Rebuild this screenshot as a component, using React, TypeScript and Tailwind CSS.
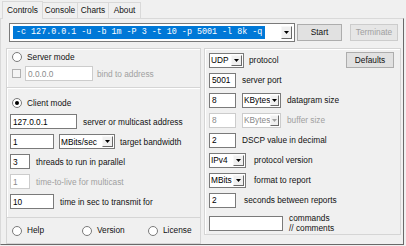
import React from 'react'

const FONT = { fontFamily: '"Liberation Sans", Arial, sans-serif' }

function Arrow({ disabled }: { disabled?: boolean }) {
  return (
    <div className="w-[11px] h-full bg-[#f0f0f0] border-t border-l border-t-[#f8f8f8] border-l-[#f8f8f8] border-r border-b border-r-[#696969] border-b-[#696969] flex items-center justify-center">
      <svg width="5" height="3" viewBox="0 0 5 3">
        <path d="M0 0h5L2.5 3z" fill={disabled ? '#a0a0a0' : '#000'} />
      </svg>
    </div>
  )
}

function Input({ value = '', w, disabled }: { value?: string; w: string; disabled?: boolean }) {
  return (
    <div
      className={`${w} h-[15px] bg-white border flex items-center px-[2px] leading-none ${
        disabled ? 'border-[#cccccc] text-[#8a8a8a]' : 'border-[#7a7a7a] text-black'
      }`}
    >
      {value}
    </div>
  )
}

function Combo({ value, w, disabled }: { value: string; w: string; disabled?: boolean }) {
  return (
    <div
      className={`${w} h-[15px] bg-white border flex items-stretch p-[1px] leading-none ${
        disabled ? 'border-[#cccccc] text-[#8a8a8a]' : 'border-[#7a7a7a] text-black'
      }`}
    >
      <div className="flex-1 flex items-center">{value}</div>
      <Arrow disabled={disabled} />
    </div>
  )
}

function Radio({ checked, label }: { checked?: boolean; label: string }) {
  return (
    <div className="flex items-center gap-[5px]">
      <div className="w-[10px] h-[10px] rounded-full border border-[#7a7a7a] bg-white flex items-center justify-center">
        {checked && <div className="w-[4px] h-[4px] rounded-full bg-black" />}
      </div>
      <span>{label}</span>
    </div>
  )
}

function Label({ children, dim }: { children: React.ReactNode; dim?: boolean }) {
  return <span className={dim ? 'text-[#a0a0a0]' : 'text-[#111]'}>{children}</span>
}

const TABS = [
  { label: 'Console', w: 'w-[35px]' },
  { label: 'Charts', w: 'w-[31px]' },
  { label: 'About', w: 'w-[32px]' },
]

export default function App() {
  return (
    <div className="w-[406px] h-[246px] bg-[#f0f0f0] text-[8.3px] text-[#111] overflow-hidden" style={FONT}>
      {/* tab strip */}
      <div className="flex items-end h-[18px] pl-[2px]">
        <div className="w-[41px] h-[18px] flex items-center justify-center bg-[#f0f0f0] border border-b-0 border-[#d9d9d9] relative z-10 -mb-px">Controls</div>
        {TABS.map(t => (
          <div key={t.label} className={`${t.w} h-[16px] flex items-center justify-center border border-b-0 border-l-0 border-[#d9d9d9]`}>
            {t.label}
          </div>
        ))}
      </div>

      {/* tab page */}
      <div className="w-[404px] h-[227px] border border-[#d9d9d9] border-b-[#696969] border-r-[#696969] flex flex-col">
        <div className="flex items-center h-[27px] pl-[8px]">
          <div className="w-[286px] h-[19px] bg-white border border-[#7a7a7a] flex items-stretch p-[2px]">
            <div className="flex-1 flex items-center pl-[1px]">
              <span
                className="bg-[#0078d7] text-white px-[3px] h-[13px] leading-[13px] text-[8.4px]"
                style={{ fontFamily: '"Liberation Mono", "Courier New", monospace' }}
              >
                -c 127.0.0.1 -u -b 1m -P 3 -t 10 -p 5001 -l 8k -q
              </span>
            </div>
            <Arrow />
          </div>
          <div className="ml-[2px] w-[45px] h-[17px] bg-[#e1e1e1] border border-[#adadad] flex items-center justify-center">Start</div>
          <div className="ml-[8px] w-[48px] h-[17px] bg-[#e6e6e6] border border-[#cccccc] text-[#a0a0a0] flex items-center justify-center">Terminate</div>
        </div>

        <div className="flex flex-1 pl-[5px] pr-[2px] pt-[2px]">
          {/* left column */}
          <div className="w-[195px] flex flex-col">
            <div className="h-[40px] border border-[#d5d5d5] shadow-[inset_1px_1px_0_#fff] px-[5px] pt-[2px] flex flex-col gap-[3px]">
              <Radio label="Server mode" />
              <div className="flex items-center gap-[4px]">
                <div className="w-[9px] h-[9px] border border-[#b0b0b0] bg-[#f4f4f4]" />
                <Input value="0.0.0.0" w="w-[68px]" disabled />
                <Label dim>bind to address</Label>
              </div>
            </div>
            <div className="h-[130px] border border-t-0 border-[#d5d5d5] shadow-[inset_1px_1px_0_#fff] px-[3px] pt-[9px] flex flex-col gap-[5px]">
              <div className="pl-[2px]"><Radio checked label="Client mode" /></div>
              <div className="flex items-center gap-[6px]">
                <Input value="127.0.0.1" w="w-[67px]" />
                <Label>server or multicast address</Label>
              </div>
              <div className="flex items-center gap-[5px]">
                <Input value="1" w="w-[44px]" />
                <Combo value="MBits/sec" w="w-[56px]" />
                <Label>target bandwidth</Label>
              </div>
              <div className="flex items-center gap-[6px]">
                <Input value="3" w="w-[20px]" />
                <Label>threads to run in parallel</Label>
              </div>
              <div className="flex items-center gap-[6px]">
                <Input value="1" w="w-[20px]" disabled />
                <Label dim>time-to-live for multicast</Label>
              </div>
              <div className="flex items-center gap-[6px]">
                <Input value="10" w="w-[44px]" />
                <Label>time in sec to transmit for</Label>
              </div>
            </div>
            <div className="flex-1 border border-t-0 border-[#d5d5d5] flex items-center px-[5px]">
              <div className="w-[70px]"><Radio label="Help" /></div>
              <div className="w-[66px]"><Radio label="Version" /></div>
              <Radio label="License" />
            </div>
          </div>

          {/* right column */}
          <div className="ml-[3px] w-[197px] h-[187px] border border-[#d5d5d5] shadow-[inset_1px_1px_0_#fff] px-[4px] pt-[3px] flex flex-col gap-[5px]">
            <div className="flex items-center gap-[5px]">
              <Combo value="UDP" w="w-[35px]" />
              <Label>protocol</Label>
              <div className="ml-auto mr-[2px] w-[48px] h-[16px] bg-[#e1e1e1] border border-[#adadad] flex items-center justify-center">Defaults</div>
            </div>
            <div className="flex items-center gap-[6px]">
              <Input value="5001" w="w-[27px]" />
              <Label>server port</Label>
            </div>
            <div className="flex items-center gap-[6px]">
              <Input value="8" w="w-[27px]" />
              <Combo value="KBytes" w="w-[39px]" />
              <Label>datagram size</Label>
            </div>
            <div className="flex items-center gap-[6px]">
              <Input value="8" w="w-[27px]" disabled />
              <Combo value="KBytes" w="w-[39px]" disabled />
              <Label dim>buffer size</Label>
            </div>
            <div className="flex items-center gap-[6px]">
              <Input value="2" w="w-[27px]" />
              <Label>DSCP value in decimal</Label>
            </div>
            <div className="flex items-center gap-[8px]">
              <Combo value="IPv4" w="w-[37px]" />
              <Label>protocol version</Label>
            </div>
            <div className="flex items-center gap-[8px]">
              <Combo value="MBits" w="w-[37px]" />
              <Label>format to report</Label>
            </div>
            <div className="flex items-center gap-[8px]">
              <Input value="2" w="w-[27px]" />
              <Label>seconds between reports</Label>
            </div>
            <div className="flex items-center gap-[6px]">
              <Input w="w-[74px]" />
              <div className="flex flex-col leading-[10px]">
                <Label>commands</Label>
                <Label>// comments</Label>
              </div>
            </div>
          </div>
        </div>
      </div>
    </div>
  )
}
